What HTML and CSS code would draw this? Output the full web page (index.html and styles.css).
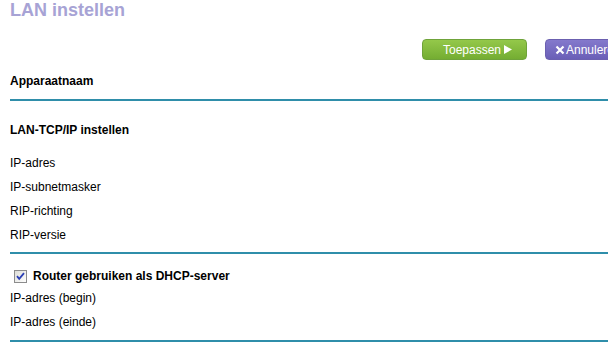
FILE: index.html
```html
<!DOCTYPE html>
<html lang="nl">
<head>
  <meta charset="UTF-8">
  <meta name="viewport" content="width=device-width, initial-scale=1.0">
  <title>LAN instellen</title>
  <link rel="stylesheet" href="styles.css">
</head>
<body>
  <div class="page">
    <h1 class="title">LAN instellen</h1>

    <div class="button-bar">
      <button type="button" class="btn btn-apply">
        Toepassen
        <svg class="icon-play" width="8" height="9" viewBox="0 0 8 9"><path d="M0 0 L8 4.5 L0 9 Z" fill="#fff"/></svg>
      </button>
      <button type="button" class="btn btn-cancel">
        <svg class="icon-x" width="10" height="10" viewBox="0 0 10 10"><path d="M1.5 1.5 L8.5 8.5 M8.5 1.5 L1.5 8.5" stroke="#fff" stroke-width="2.2" fill="none"/></svg>
        Annuleren
      </button>
    </div>

    <!-- Apparaatnaam -->
    <div class="section section-name">
      <div class="row head">Apparaatnaam</div>
    </div>

    <!-- LAN-TCP/IP -->
    <div class="section section-tcp">
      <div class="row head head-tcp">LAN-TCP/IP instellen</div>
      <div class="row">IP-adres</div>
      <div class="row">IP-subnetmasker</div>
      <div class="row">RIP-richting</div>
      <div class="row">RIP-versie</div>
    </div>

    <!-- DHCP -->
    <div class="section section-dhcp">
      <label class="row head check-row">
        <svg class="checkbox" width="13" height="13" viewBox="0 0 13 13">
          <defs>
            <linearGradient id="cbFill" x1="0" y1="0" x2="1" y2="1">
              <stop offset="0" stop-color="#dcdcd6"/>
              <stop offset="1" stop-color="#ffffff"/>
            </linearGradient>
          </defs>
          <rect x="0.5" y="0.5" width="12" height="12" fill="url(#cbFill)" stroke="#8c8c8c"/>
          <path d="M3 6.2 L5.2 8.8 L10 3.2" stroke="#2b3fb4" stroke-width="1.8" fill="none"/>
        </svg>
        Router gebruiken als DHCP-server
      </label>
      <div class="row">IP-adres (begin)</div>
      <div class="row">IP-adres (einde)</div>
    </div>
  </div>
</body>
</html>
```

FILE: styles.css
```css
/* algemeen */
body {
  margin: 0;
  padding: 0;
  background: #fff;
  font-family: "Liberation Sans", Arial, sans-serif;
  font-size: 12px;
  color: #000;
  overflow: hidden;
}
.page {
  width: 620px;
  padding: 0 10px;
}
.title {
  margin: 0;
  font-size: 18px;
  line-height: 20px;
  font-weight: bold;
  color: #a7a3d5;
}

/* knoppen */
.button-bar {
  display: flex;
  justify-content: flex-end;
  gap: 18px;
  margin-top: 19px;
}
.btn {
  display: flex;
  align-items: center;
  height: 21px;
  border-radius: 4px;
  font-family: "Liberation Sans", Arial, sans-serif;
  font-size: 12px;
  color: #fff;
  cursor: pointer;
  padding: 0;
}
.btn-apply {
  width: 105px;
  padding-left: 20px;
  gap: 3px;
  border: 1px solid #6fa33a;
  background: linear-gradient(#94c84a, #74ad32);
}
.btn-cancel {
  width: 85px;
  padding-left: 9px;
  gap: 1px;
  border: 1px solid #6b60b0;
  background: linear-gradient(#8479cc, #6a5fb7);
}
.icon-play,
.icon-x {
  display: block;
}

/* secties */
.section {
  border-bottom: 2px solid #2f8eaa;
}
.section-name {
  padding: 9px 0 6px;
}
.section-tcp {
  padding: 17px 0 5px;
}
.section-dhcp {
  padding: 13px 0 6px;
}
.row {
  line-height: 24px;
}
.head {
  font-weight: bold;
}
.head-tcp {
  margin-bottom: 9px;
}
.check-row {
  display: flex;
  align-items: center;
  gap: 6px;
  padding-left: 4px;
  line-height: 19px;
}
.checkbox {
  display: block;
}
```
